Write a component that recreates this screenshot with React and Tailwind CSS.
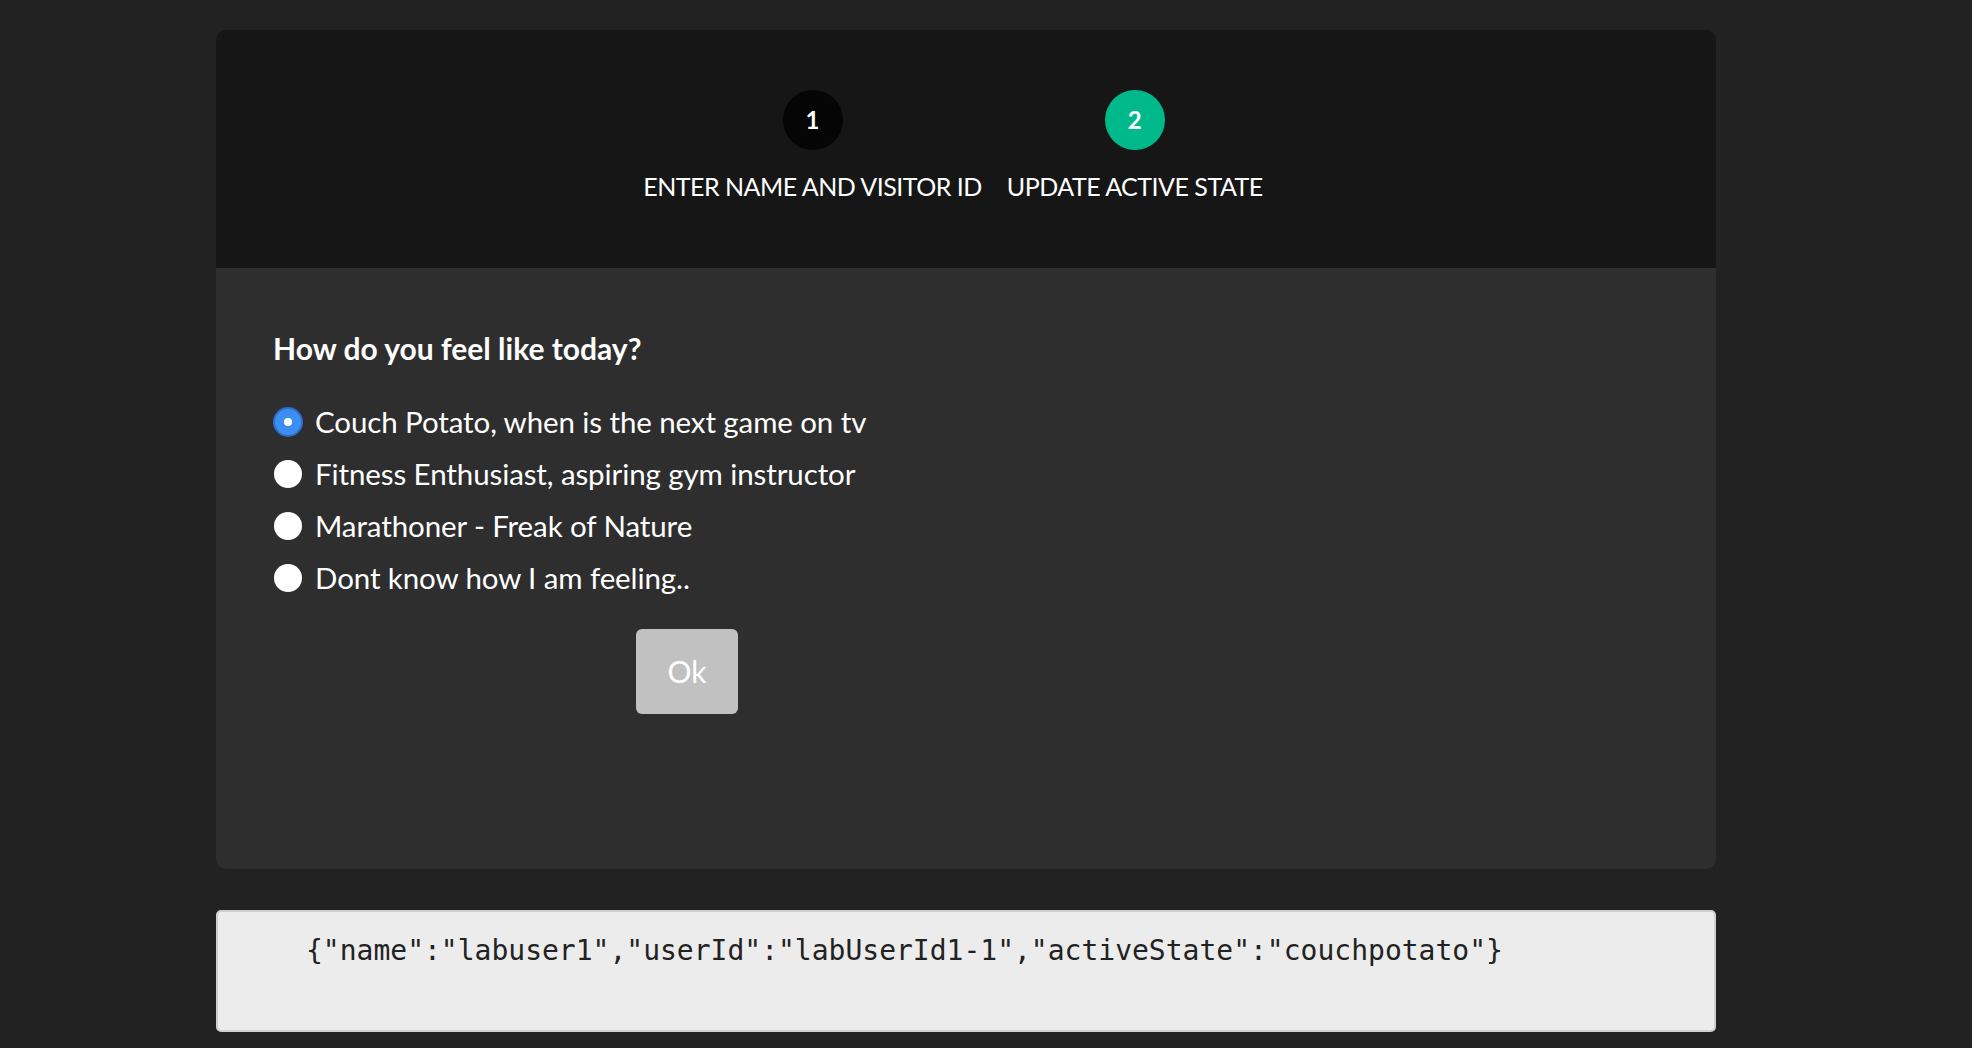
import React, { useState } from 'react';

const options = [
  { value: 'couchpotato', label: 'Couch Potato, when is the next game on tv' },
  { value: 'fitness', label: 'Fitness Enthusiast, aspiring gym instructor' },
  { value: 'marathoner', label: 'Marathoner - Freak of Nature' },
  { value: 'unknown', label: 'Dont know how I am feeling..' },
];

const Step = ({ number, label, active }) => (
  <div className="flex flex-col items-center">
    <div
      className={`w-[60px] h-[60px] rounded-full flex items-center justify-center text-white text-[24px] font-bold ${
        active ? 'bg-[#00b98b]' : 'bg-[#050505]'
      }`}
    >
      {number}
    </div>
    <div className="mt-[20px] text-white text-[25px] leading-[32px] tracking-[-0.5px]">{label}</div>
  </div>
);

const Radio = ({ checked }) =>
  checked ? (
    <span className="w-[30px] h-[30px] rounded-full bg-[#2b6fcb] flex items-center justify-center shrink-0">
      <span className="w-[26px] h-[26px] rounded-full bg-[#3d8ef2] flex items-center justify-center">
        <span className="w-[8px] h-[8px] rounded-full bg-white" />
      </span>
    </span>
  ) : (
    <span className="w-[30px] h-[30px] flex items-center justify-center shrink-0">
      <span className="w-[28px] h-[28px] rounded-full bg-white" />
    </span>
  );

export default function App() {
  const [state, setState] = useState('couchpotato');

  const data = { name: 'labuser1', userId: 'labUserId1-1', activeState: state };

  return (
    <div className="min-h-screen bg-[#222222] pt-[30px] pb-[20px]" style={{ fontFamily: 'Lato, "Noto Sans", sans-serif' }}>
      <div className="ml-[216px] w-[1500px] rounded-[10px] overflow-hidden">
        {/* Stepper */}
        <div className="bg-[#161616] h-[238px] pt-[60px] flex justify-center gap-[25px] pr-[26px]">
          <Step number="1" label="ENTER NAME AND VISITOR ID" />
          <Step number="2" label="UPDATE ACTIVE STATE" active />
        </div>

        {/* Form */}
        <div className="bg-[#2e2e2e] pt-[62px] pb-[155px] pl-[57px]">
          <h2 className="text-white text-[30px] font-bold leading-[36px]">How do you feel like today?</h2>
          <div className="mt-[30px] flex flex-col">
            {options.map((o) => (
              <label
                key={o.value}
                className="flex items-center h-[52px] cursor-pointer"
                onClick={() => setState(o.value)}
              >
                <Radio checked={state === o.value} />
                <span className="ml-[12px] text-white text-[29.5px] tracking-[-0.1px]">{o.label}</span>
              </label>
            ))}
          </div>
          <button className="mt-[25px] ml-[363px] w-[102px] h-[85px] rounded-[6px] bg-[#c1c1c1] text-white text-[30px]">
            Ok
          </button>
        </div>
      </div>

      <pre
        className="mt-[41px] ml-[216px] w-[1500px] h-[122px] bg-[#ececec] border-2 border-[#cfcfcf] rounded-[5px] pt-[18px] pl-[88px] text-[28px] leading-[42px] text-[#222222]"
        style={{ fontFamily: '"DejaVu Sans Mono", monospace' }}
      >
        {JSON.stringify(data)}
      </pre>
    </div>
  );
}
